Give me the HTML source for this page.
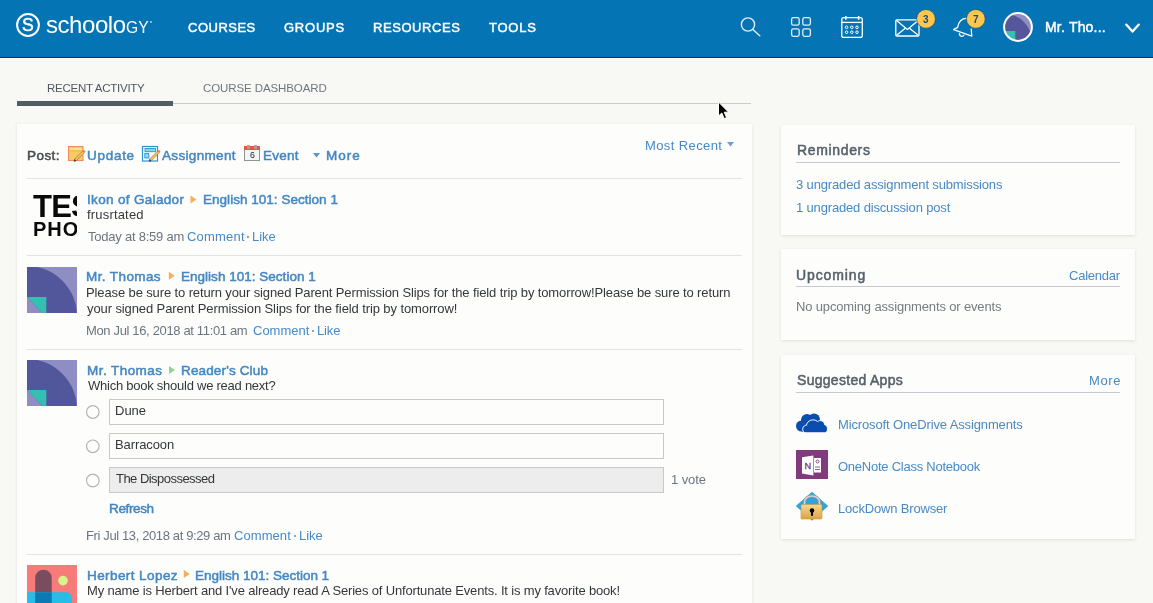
<!DOCTYPE html>
<html><head><meta charset="utf-8">
<style>
*{margin:0;padding:0;box-sizing:border-box}
html,body{width:1153px;height:603px;overflow:hidden;background:#f8f8f5;font-family:"Liberation Sans",sans-serif;position:relative}
.a{position:absolute}
svg.a{overflow:visible}
.t{position:absolute;white-space:nowrap;line-height:1;will-change:transform}
.card{position:absolute;background:#fdfdfc;box-shadow:0 1px 3px rgba(60,50,50,0.12)}
.hr{position:absolute;height:1px;background:#e3e3e6}
.box{position:absolute;left:109px;width:555px;height:26px;border:1px solid #c9c9c9;background:#fdfdfc}
.dot{position:absolute;width:2px;height:2px;background:#9aa3aa}
</style></head><body>
<div class="a" style="left:0;top:0;width:1153px;height:57px;background:#0474b4"></div>
<div class="a" style="left:0;top:57px;width:1153px;height:1px;background:#1b2a33"></div>
<div class="a" style="left:0;top:58px;width:1153px;height:1px;background:#fdfdfb"></div>

<!-- logo -->
<svg class="a" style="left:0;top:0" width="1153" height="57">
<circle cx="28" cy="25" r="10.9" fill="none" stroke="#fff" stroke-width="2"/>
<!-- search -->
<g fill="none" stroke="#e6eef5" stroke-width="1.4" stroke-linecap="round">
<circle cx="748" cy="24.5" r="6.6"/>
<line x1="752.9" y1="29.6" x2="759.8" y2="35.8"/>
</g>
<!-- grid -->
<g fill="none" stroke="#e6eef5" stroke-width="1.3">
<rect x="791.6" y="17.6" width="7.6" height="7.6" rx="1.8"/>
<rect x="802.8" y="17.6" width="7.6" height="7.6" rx="1.8"/>
<rect x="791.6" y="28.8" width="7.6" height="7.6" rx="1.8"/>
<rect x="802.8" y="28.8" width="7.6" height="7.6" rx="1.8"/>
</g>
<!-- calendar -->
<g fill="none" stroke="#ffffff" stroke-width="1.3">
<rect x="841.8" y="17.6" width="20.5" height="19.8" rx="2"/>
<line x1="841.8" y1="22.4" x2="862.3" y2="22.4"/>
<line x1="845.8" y1="16" x2="845.8" y2="19.8" stroke-width="1.6"/>
<line x1="858.6" y1="16" x2="858.6" y2="19.8" stroke-width="1.6"/>
<g stroke-width="1"><circle cx="846.6" cy="27.3" r="1.3"/><circle cx="851.8" cy="27.3" r="1.3"/><circle cx="857" cy="27.3" r="1.3"/>
<circle cx="846.6" cy="32.2" r="1.3"/><circle cx="851.8" cy="32.2" r="1.3"/><circle cx="857" cy="32.2" r="1.3"/></g>
</g>
<!-- mail -->
<g fill="none" stroke="#ffffff" stroke-width="1.3" stroke-linejoin="round">
<rect x="895.8" y="19.8" width="23.2" height="16.2" rx="1"/>
<polyline points="896.3,20.3 907.4,29.4 918.5,20.3"/>
<line x1="896.3" y1="35.5" x2="905.3" y2="28.3"/>
<line x1="918.5" y1="35.5" x2="909.5" y2="28.3"/>
</g>
<circle cx="926" cy="18.9" r="9.4" fill="#fcc74c" stroke="#1d4f78" stroke-width="0.7"/>
<!-- bell -->
<g fill="none" stroke="#ffffff" stroke-width="1.3" stroke-linejoin="round">
<path d="M966.5,18.3 C961,18.3 958.5,22 957.6,27.4 L953.6,29.6 L971.8,36.2 L971.2,28.5"/>
<path d="M959.6,33 a2.3,2.3 0 0 0 4.6,1.6"/>
</g>
<circle cx="975.8" cy="18.9" r="9.4" fill="#fcc74c" stroke="#1d4f78" stroke-width="0.7"/>
<!-- avatar -->
<defs><clipPath id="hc"><circle cx="1018" cy="27" r="13.5"/></clipPath></defs>
<g clip-path="url(#hc)">
<rect x="1003" y="12" width="30" height="30" fill="#8f8fc4"/>
<circle cx="1004" cy="42" r="28.3" fill="#55579b"/>
<polygon points="1004,31 1015.3,31 1015.3,41 1013,41" fill="#36c0b0"/>
</g>
<circle cx="1018" cy="27" r="13.9" fill="none" stroke="#fff" stroke-width="2"/>
<!-- chevron -->
<polyline points="1126.2,24.6 1132.5,31.6 1138.8,24.6" fill="none" stroke="#fff" stroke-width="2.3" stroke-linecap="round" stroke-linejoin="round"/>
</svg>
<div class="t" style="left:22px;top:16.5px;color:#fff;font-size:17.6px;-webkit-text-stroke:0.45px #fff">S</div>
<div class="t" style="left:46px;top:13px;color:#fff;font-size:24px;letter-spacing:-0.45px">schoolo<span style="display:inline-block;font-size:17.4px;letter-spacing:0;transform:scaleX(0.9);transform-origin:0 0;margin-left:0.5px">GY</span></div>
<div class="a" style="left:150px;top:20.5px;width:2.4px;height:2.4px;border-radius:50%;background:#a9cbe6"></div>
<div class="t" style="left:923px;top:15px;color:#1b4b76;font-size:10px;font-weight:bold">3</div>
<div class="t" style="left:973px;top:15px;color:#1b4b76;font-size:10px;font-weight:bold">7</div>

<!-- tabs -->
<div class="a" style="left:17px;top:101px;width:156px;height:5px;background:#515c63"></div>
<div class="a" style="left:173px;top:103px;width:578px;height:1px;background:#c9cdcd"></div>

<!-- main card -->
<div class="card" style="left:17px;top:124px;width:735px;height:500px"></div>
<div class="hr" style="left:27px;top:178px;width:715px"></div>
<div class="hr" style="left:27px;top:255px;width:715px"></div>
<div class="hr" style="left:27px;top:349px;width:715px"></div>
<div class="hr" style="left:27px;top:554px;width:715px"></div>

<svg class="a" style="left:0;top:0" width="1153" height="603">
<!-- update icon -->
<rect x="68.5" y="146.5" width="14.5" height="14" fill="#f7cb63" stroke="#ee8a5b" stroke-width="1"/>
<rect x="70" y="148" width="11.5" height="2" fill="#f9e08e"/>
<line x1="70" y1="151" x2="81" y2="151" stroke="#e9b04e" stroke-width="0.8"/>
<path d="M74.6,159 L82.6,151 L84.4,152.8 L76.4,160.8 L74,161.4 Z" fill="#f5c04a" stroke="#8a5060" stroke-width="0.5"/><path d="M82.6,151 L83.8,149.8 L85.6,151.6 L84.4,152.8 Z" fill="#e07a8a"/><path d="M74,161.4 L74.6,159 L76.4,160.8 Z" fill="#333"/>
<!-- assignment icon -->
<rect x="142.5" y="146.5" width="15" height="14.5" fill="#ffffff" stroke="#2c93d3" stroke-width="1.2"/>
<rect x="145" y="148.5" width="10.5" height="3.2" fill="#8fd0ef" stroke="#2c93d3" stroke-width="0.9"/>
<rect x="144.8" y="153.5" width="4" height="4.5" fill="#8fd9ec" stroke="#2c93d3" stroke-width="0.9"/>
<path d="M149.6,159 L157.6,151 L159.4,152.8 L151.4,160.8 L149,161.4 Z" fill="#f5c04a" stroke="#8a5060" stroke-width="0.5"/><path d="M157.6,151 L158.8,149.8 L160.6,151.6 L159.4,152.8 Z" fill="#e07a8a"/><path d="M149,161.4 L149.6,159 L151.4,160.8 Z" fill="#333"/>
<!-- event icon -->
<rect x="244.5" y="149" width="15" height="11.5" fill="#f3f4f5" stroke="#8d9399" stroke-width="1"/>
<rect x="244" y="146" width="16" height="4" fill="#e8593a"/>
<rect x="247" y="145" width="2.8" height="4" fill="#9aa3aa"/>
<rect x="254.2" y="145" width="2.8" height="4" fill="#9aa3aa"/>
<!-- more triangle -->
<polygon points="313,153 320,153 316.5,157.5" fill="#5b95c8"/>
<polygon points="727,142 734,142 730.5,146.5" fill="#6c9fcc"/>
<!-- name arrows -->
<polygon points="190.5,195.5 196.5,199.5 190.5,203.5" fill="#f4ae5c"/>
<polygon points="168.8,271.8 174.8,275.8 168.8,279.8" fill="#f4ae5c"/>
<polygon points="169,366 175,370 169,374" fill="#8fd58f"/>
<polygon points="183.8,570 189.8,574 183.8,578" fill="#f4ae5c"/>

<!-- avatars -->
<defs>
<clipPath id="av"><rect x="0" y="0" width="50" height="46"/></clipPath>
<g id="mt"><g clip-path="url(#av)">
<rect x="0" y="0" width="50" height="46" fill="#8e8ec3"/>
<circle cx="0" cy="49" r="50" fill="#52569b"/>
<polygon points="0,30 19.3,30 19.3,46 15,46" fill="#35bfb0"/>
<polygon points="0,30 15,46 0,46" fill="#8e8ec3"/>
</g></g>
<clipPath id="hl"><rect x="27" y="565" width="50" height="40"/></clipPath>
<clipPath id="tp"><rect x="27" y="188" width="50" height="52"/></clipPath>
</defs>
<use href="#mt" x="27" y="267"/>
<use href="#mt" x="27" y="360"/>
<g clip-path="url(#hl)">
<rect x="27" y="565" width="50" height="40" fill="#f77b79"/>
<rect x="35.2" y="569.7" width="16.5" height="40" rx="8.25" fill="#7a4d5e"/>
<circle cx="63" cy="580.6" r="4.8" fill="#d6f58c"/>
<rect x="20" y="592.3" width="52" height="20" rx="6" fill="#27bde8"/>
<rect x="35.2" y="592.3" width="16.5" height="20" fill="#0b7ab3"/>
</g>
<g clip-path="url(#tp)">
<rect x="27" y="188" width="50" height="52" fill="#fdfdfc"/>
</g>

<!-- radios -->
<g fill="#fdfdfc" stroke="#b3b6b9" stroke-width="1.2">
<circle cx="92.8" cy="412" r="6.3"/>
<circle cx="92.8" cy="446.3" r="6.3"/>
<circle cx="92.8" cy="480.5" r="6.3"/>
</g>

<!-- cursor -->
<path d="M718.5,102 L718.5,116 L721.8,113 L724.2,118.6 L726.6,117.6 L724.2,112.2 L728.6,112.2 Z" fill="#000" stroke="#fff" stroke-width="1" stroke-linejoin="round"/>
</svg>
<div class="t" style="left:33px;top:191px;font-size:31px;font-weight:bold;color:#0a0a0a;letter-spacing:-0.8px;width:44px;overflow:hidden">TES</div>
<div class="t" style="left:33px;top:219px;font-size:20px;font-weight:bold;color:#0a0a0a;letter-spacing:1px;width:44px;overflow:hidden">PHO</div>
<div class="t" style="left:249.6px;top:150.6px;font-size:8.8px;color:#222">6</div>

<div class="box" style="top:399px"></div>
<div class="box" style="top:433px"></div>
<div class="box" style="top:467px;background:#ededed"></div>

<div class="dot" style="left:247px;top:236px"></div>
<div class="dot" style="left:312px;top:330px"></div>
<div class="dot" style="left:294px;top:535px"></div>

<!-- right cards -->
<div class="card" style="left:781px;top:125px;width:354px;height:110px"></div>
<div class="card" style="left:781px;top:249px;width:354px;height:91px"></div>
<div class="card" style="left:781px;top:355px;width:354px;height:184px"></div>
<div class="a" style="left:796px;top:162px;width:324px;height:1px;background:#c5cad0"></div>
<div class="a" style="left:796px;top:286px;width:324px;height:1px;background:#c5cad0"></div>
<div class="a" style="left:796px;top:392px;width:324px;height:1px;background:#c5cad0"></div>

<svg class="a" style="left:0;top:0" width="1153" height="603">
<!-- onedrive -->
<g fill="#0a4db0">
<circle cx="801.5" cy="426" r="5.5"/>
<circle cx="807" cy="420" r="6"/>
<circle cx="814" cy="419.5" r="6"/>
<rect x="801.5" y="420" width="14" height="11.5"/>
</g>
<g fill="#0a4db0" stroke="#fdfdfc" stroke-width="1">
<path d="M806,432.8 C801.5,432.8 801.5,425.5 806.5,425.2 C807,420.5 813.5,418 817.5,421.5 C820,419.5 824.5,421 824.5,424.5 C828.5,425.5 828.5,432.8 824.5,432.8 Z"/>
</g>
<!-- onenote -->
<rect x="796" y="450" width="32" height="29" fill="#813a7c"/>
<path d="M802,457.2 L813.4,455.6 L813.4,475.4 L802,473.6 Z" fill="#fff"/>
<rect x="814" y="458" width="7" height="14.5" fill="#fff"/>
<text x="804.6" y="468.6" font-family="Liberation Sans" font-size="9.2" fill="#813a7c" stroke="#813a7c" stroke-width="0.3">N</text>
<circle cx="817.5" cy="461.5" r="1.5" fill="none" stroke="#813a7c" stroke-width="0.9"/>
<line x1="815" y1="467" x2="820" y2="467" stroke="#813a7c" stroke-width="0.8"/>
<line x1="815" y1="469.5" x2="820" y2="469.5" stroke="#813a7c" stroke-width="0.8"/>
<!-- lockdown -->
<polygon points="812,491.8 828.2,506 812,520.7 795.8,506" fill="#2ea3dd"/>
<path d="M804.5,505 L804.5,502 A7.5,6 0 0 1 819.5,502 L819.5,505" fill="none" stroke="#9c9ca4" stroke-width="2.8"/><path d="M804.5,505 L804.5,502 A7.5,6 0 0 1 819.5,502 L819.5,505" fill="none" stroke="#dcdce0" stroke-width="1.2"/>
<defs><linearGradient id="lg" x1="0" y1="0" x2="0" y2="1"><stop offset="0" stop-color="#f6d88c"/><stop offset="1" stop-color="#dca245"/></linearGradient></defs><rect x="801" y="504.4" width="21" height="14.6" rx="1" fill="url(#lg)" stroke="#c9973a" stroke-width="0.6"/>
<circle cx="812" cy="510.5" r="2.3" fill="#000"/>
<rect x="811" y="511" width="2" height="4.8" fill="#000"/>
</svg>

<div class="t" style="left:187.5px;top:21px;font-size:13px;font-weight:normal;color:#ffffff;letter-spacing:0.5px;-webkit-text-stroke:0.45px currentColor">COURSES</div>
<div class="t" style="left:284.4px;top:21px;font-size:13px;font-weight:normal;color:#ffffff;letter-spacing:0.76px;-webkit-text-stroke:0.45px currentColor">GROUPS</div>
<div class="t" style="left:372.75px;top:21px;font-size:13px;font-weight:normal;color:#ffffff;letter-spacing:0.562px;-webkit-text-stroke:0.45px currentColor">RESOURCES</div>
<div class="t" style="left:489.0px;top:21px;font-size:13px;font-weight:normal;color:#ffffff;letter-spacing:0.75px;-webkit-text-stroke:0.45px currentColor">TOOLS</div>
<div class="t" style="left:1045.4px;top:20px;font-size:14px;font-weight:normal;color:#ffffff;letter-spacing:0.2px;-webkit-text-stroke:0.45px currentColor">Mr. Tho...</div>
<div class="t" style="left:46.6px;top:83px;font-size:11.5px;font-weight:normal;color:#4f5961;letter-spacing:-0.257px;">RECENT ACTIVITY</div>
<div class="t" style="left:202.75px;top:83px;font-size:11.5px;font-weight:normal;color:#6e7880;letter-spacing:-0.1px;">COURSE DASHBOARD</div>
<div class="t" style="left:26.8px;top:149px;font-size:13.5px;font-weight:normal;color:#474b4f;letter-spacing:0.45px;-webkit-text-stroke:0.5px currentColor">Post:</div>
<div class="t" style="left:87.4px;top:149px;font-size:13.5px;font-weight:normal;color:#4487c2;letter-spacing:0.72px;-webkit-text-stroke:0.5px currentColor">Update</div>
<div class="t" style="left:162.2px;top:149px;font-size:13.5px;font-weight:normal;color:#4487c2;letter-spacing:0.334px;-webkit-text-stroke:0.5px currentColor">Assignment</div>
<div class="t" style="left:263.0px;top:149px;font-size:13.5px;font-weight:normal;color:#4487c2;letter-spacing:0.25px;-webkit-text-stroke:0.5px currentColor">Event</div>
<div class="t" style="left:326.0px;top:149px;font-size:13.5px;font-weight:normal;color:#4487c2;letter-spacing:1.0px;-webkit-text-stroke:0.5px currentColor">More</div>
<div class="t" style="left:645.0px;top:139px;font-size:13px;font-weight:normal;color:#478ac6;letter-spacing:0.4px;">Most Recent</div>
<div class="t" style="left:86.7px;top:193px;font-size:13.5px;font-weight:normal;color:#4487c2;letter-spacing:0.329px;-webkit-text-stroke:0.5px currentColor">Ikon of Galador</div>
<div class="t" style="left:202.6px;top:193px;font-size:13.5px;font-weight:normal;color:#4487c2;letter-spacing:0.028px;-webkit-text-stroke:0.5px currentColor">English 101: Section 1</div>
<div class="t" style="left:87.2px;top:208px;font-size:13px;font-weight:normal;color:#35383b;letter-spacing:0.178px;">frusrtated</div>
<div class="t" style="left:87.7px;top:230px;font-size:13px;font-weight:normal;color:#6b7580;letter-spacing:-0.227px;">Today at 8:59 am</div>
<div class="t" style="left:186.7px;top:230px;font-size:13px;font-weight:normal;color:#478ac6;letter-spacing:0.2px;">Comment</div>
<div class="t" style="left:252.0px;top:230px;font-size:13px;font-weight:normal;color:#478ac6;letter-spacing:0.0px;">Like</div>
<div class="t" style="left:86.4px;top:270px;font-size:13.5px;font-weight:normal;color:#4487c2;letter-spacing:0.4px;-webkit-text-stroke:0.5px currentColor">Mr. Thomas</div>
<div class="t" style="left:180.8px;top:270px;font-size:13.5px;font-weight:normal;color:#4487c2;letter-spacing:0.019px;-webkit-text-stroke:0.5px currentColor">English 101: Section 1</div>
<div class="t" style="left:86.4px;top:286px;font-size:13px;font-weight:normal;color:#35383b;letter-spacing:-0.12px;">Please be sure to return your signed Parent Permission Slips for the field trip by tomorrow!Please be sure to return</div>
<div class="t" style="left:87.4px;top:302px;font-size:13px;font-weight:normal;color:#35383b;letter-spacing:-0.103px;">your signed Parent Permission Slips for the field trip by tomorrow!</div>
<div class="t" style="left:86.4px;top:324px;font-size:13px;font-weight:normal;color:#6b7580;letter-spacing:-0.348px;">Mon Jul 16, 2018 at 11:01 am</div>
<div class="t" style="left:252.5px;top:324px;font-size:13px;font-weight:normal;color:#478ac6;letter-spacing:-0.0px;">Comment</div>
<div class="t" style="left:317.3px;top:324px;font-size:13px;font-weight:normal;color:#478ac6;letter-spacing:-0.133px;">Like</div>
<div class="t" style="left:87.0px;top:364px;font-size:13.5px;font-weight:normal;color:#4487c2;letter-spacing:0.444px;-webkit-text-stroke:0.5px currentColor">Mr. Thomas</div>
<div class="t" style="left:180.6px;top:364px;font-size:13.5px;font-weight:normal;color:#4487c2;letter-spacing:0.15px;-webkit-text-stroke:0.5px currentColor">Reader&#x27;s Club</div>
<div class="t" style="left:88.0px;top:379px;font-size:13px;font-weight:normal;color:#35383b;letter-spacing:-0.247px;">Which book should we read next?</div>
<div class="t" style="left:115.2px;top:404px;font-size:13px;font-weight:normal;color:#333638;letter-spacing:0.0px;">Dune</div>
<div class="t" style="left:115.2px;top:438px;font-size:13px;font-weight:normal;color:#333638;letter-spacing:-0.1px;">Barracoon</div>
<div class="t" style="left:116.2px;top:472px;font-size:13px;font-weight:normal;color:#333638;letter-spacing:-0.533px;">The Dispossessed</div>
<div class="t" style="left:671.2px;top:473px;font-size:13px;font-weight:normal;color:#6b7580;letter-spacing:-0.08px;">1 vote</div>
<div class="t" style="left:108.6px;top:502px;font-size:13.5px;font-weight:normal;color:#4487c2;letter-spacing:-0.367px;-webkit-text-stroke:0.5px currentColor">Refresh</div>
<div class="t" style="left:86.3px;top:529px;font-size:13px;font-weight:normal;color:#6b7580;letter-spacing:-0.377px;">Fri Jul 13, 2018 at 9:29 am</div>
<div class="t" style="left:234.3px;top:529px;font-size:13px;font-weight:normal;color:#478ac6;letter-spacing:0.067px;">Comment</div>
<div class="t" style="left:299.0px;top:529px;font-size:13px;font-weight:normal;color:#478ac6;letter-spacing:0.0px;">Like</div>
<div class="t" style="left:86.8px;top:569px;font-size:13.5px;font-weight:normal;color:#4487c2;letter-spacing:0.417px;-webkit-text-stroke:0.5px currentColor">Herbert Lopez</div>
<div class="t" style="left:195.4px;top:569px;font-size:13.5px;font-weight:normal;color:#4487c2;letter-spacing:-0.01px;-webkit-text-stroke:0.5px currentColor">English 101: Section 1</div>
<div class="t" style="left:86.8px;top:584px;font-size:13px;font-weight:normal;color:#35383b;letter-spacing:-0.165px;">My name is Herbert and I&#x27;ve already read A Series of Unfortunate Events. It is my favorite book!</div>
<div class="t" style="left:796.5px;top:143px;font-size:14px;font-weight:normal;color:#55606a;letter-spacing:0.651px;-webkit-text-stroke:0.5px currentColor">Reminders</div>
<div class="t" style="left:795.8px;top:178px;font-size:13px;font-weight:normal;color:#478ac6;letter-spacing:-0.144px;">3 ungraded assignment submissions</div>
<div class="t" style="left:795.8px;top:201px;font-size:13px;font-weight:normal;color:#478ac6;letter-spacing:-0.16px;">1 ungraded discussion post</div>
<div class="t" style="left:796.4px;top:268px;font-size:14px;font-weight:normal;color:#55606a;letter-spacing:0.886px;-webkit-text-stroke:0.5px currentColor">Upcoming</div>
<div class="t" style="left:1069.0px;top:269px;font-size:13px;font-weight:normal;color:#478ac6;letter-spacing:-0.228px;">Calendar</div>
<div class="t" style="left:796.2px;top:300px;font-size:13px;font-weight:normal;color:#757c82;letter-spacing:-0.15px;">No upcoming assignments or events</div>
<div class="t" style="left:797.4px;top:373px;font-size:14px;font-weight:normal;color:#55606a;letter-spacing:0.292px;-webkit-text-stroke:0.5px currentColor">Suggested Apps</div>
<div class="t" style="left:1089.3px;top:374px;font-size:13px;font-weight:normal;color:#478ac6;letter-spacing:0.6px;">More</div>
<div class="t" style="left:837.6px;top:418px;font-size:13px;font-weight:normal;color:#478ac6;letter-spacing:-0.131px;">Microsoft OneDrive Assignments</div>
<div class="t" style="left:837.6px;top:460px;font-size:13px;font-weight:normal;color:#478ac6;letter-spacing:-0.248px;">OneNote Class Notebook</div>
<div class="t" style="left:837.6px;top:502px;font-size:13px;font-weight:normal;color:#478ac6;letter-spacing:-0.174px;">LockDown Browser</div>
</body></html>
